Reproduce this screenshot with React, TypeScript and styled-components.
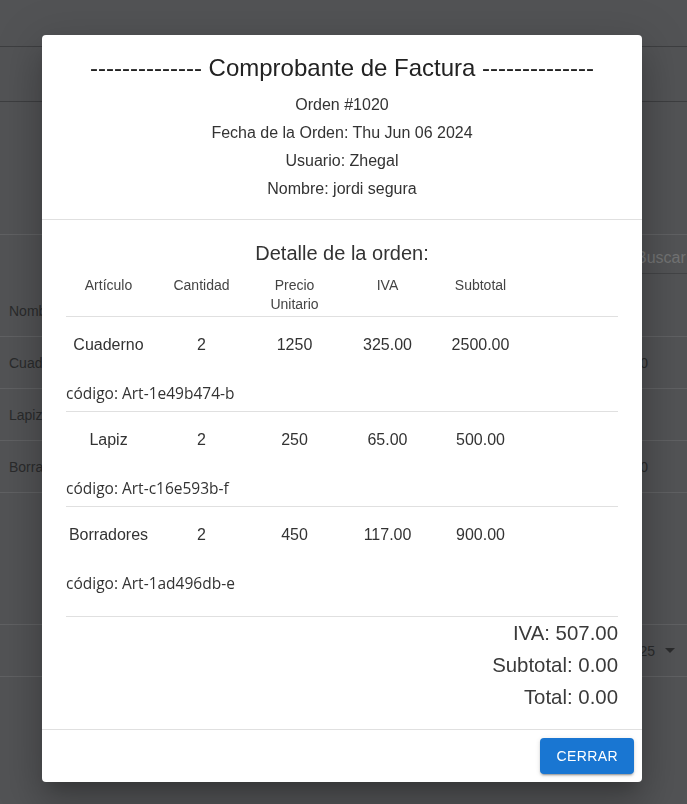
import React from "react";
import styled, { createGlobalStyle } from "styled-components";

const GlobalStyle = createGlobalStyle`
  html, body { margin: 0; padding: 0; }
  body {
    background: #525355;
    font-family: "Liberation Sans", Arial, sans-serif;
    overflow: hidden;
  }
`;

/* ---------- background page (dimmed under the modal) ---------- */
const Page = styled.div`
  width: 100%;
  height: 804px;
  background: #525355;
  color: #2a2b2c;
  font-size: 14px;
`;

const Band = styled.div<{ $h: number; $line: string }>`
  height: ${(p) => p.$h}px;
  border-bottom: 1px solid ${(p) => p.$line};
  display: flex;
  align-items: center;
  justify-content: space-between;
  padding: 0 39px 0 9px;
`;

const SearchRow = styled.div`
  height: 50px;
  display: flex;
  justify-content: flex-end;
  align-items: flex-start;
`;

const SearchField = styled.div`
  width: 51px;
  margin-top: 14px;
  padding: 0 0 7px 0;
  border-bottom: 1px solid #434446;
  color: #727374;
  font-size: 16px;
  line-height: 17px;
  white-space: nowrap;
  overflow: hidden;
`;

const PageSize = styled.div`
  display: flex;
  align-items: center;
  gap: 10px;
  margin-right: -27px;
  font-size: 14px;
`;

const Caret = styled.span`
  width: 0;
  height: 0;
  border-left: 5px solid transparent;
  border-right: 5px solid transparent;
  border-top: 5px solid #2a2b2c;
`;

/* ---------- modal ---------- */
const Backdrop = styled.div`
  position: fixed;
  inset: 0;
  display: flex;
  align-items: flex-start;
  justify-content: flex-start;
  padding: 35px 0 0 42px;
`;

const Dialog = styled.div`
  width: 600px;
  background: #fff;
  border-radius: 4px;
  display: flex;
  flex-direction: column;
  color: rgba(0, 0, 0, 0.87);
  box-shadow: 0px 11px 15px -7px rgba(0, 0, 0, 0.2),
    0px 24px 38px 3px rgba(0, 0, 0, 0.14), 0px 9px 46px 8px rgba(0, 0, 0, 0.12);
`;

const Header = styled.header`
  padding: 16px 24px 16px;
  text-align: center;
  border-bottom: 1px solid #e0e0e0;
`;

const Title = styled.h2`
  margin: 0 0 6px;
  font-size: 24px;
  line-height: 34px;
  font-weight: 400;
  color: #222;
  white-space: nowrap;
`;

const InfoLine = styled.div`
  font-size: 16px;
  line-height: 28px;
  color: #333;
`;

const Content = styled.section`
  padding: 19px 24px 16px;
`;

const SectionTitle = styled.div`
  text-align: center;
  font-size: 20px;
  line-height: 28px;
  margin-bottom: 9px;
  color: #333;
`;

const Cells = styled.div`
  display: grid;
  grid-template-columns: repeat(5, 93px);
  margin-left: -4px;
  text-align: center;
`;

const HeadRow = styled.div`
  padding-bottom: 2px;
  border-bottom: 1px solid #e0e0e0;
  font-size: 14px;
  line-height: 19px;
  color: #444;
`;

const ItemRow = styled.div<{ $last?: boolean }>`
  padding: 16px 0 7px;
  border-bottom: ${(p) => (p.$last ? "none" : "1px solid #e0e0e0")};
  font-size: 16px;
  line-height: 24px;
  color: #333;
`;

const Code = styled.div`
  margin-top: 25px;
  font-family: "Open Sans", "Noto Sans", sans-serif;
  font-size: 15.5px;
  line-height: 22px;
  color: #333;
`;

const Divider = styled.hr`
  margin: 15px 0 0;
  border: none;
  border-top: 1px solid #e0e0e0;
`;

const TotalLine = styled.div`
  text-align: right;
  font-size: 20.4px;
  line-height: 32px;
  color: #3a3a3a;
`;

const Actions = styled.footer`
  border-top: 1px solid #e0e0e0;
  padding: 8px;
  display: flex;
  justify-content: flex-end;
`;

const Button = styled.button`
  height: 36px;
  padding: 6px 16px;
  border: none;
  border-radius: 4px;
  background: #1976d2;
  color: #fff;
  font-family: "Liberation Sans", Arial, sans-serif;
  font-weight: 400;
  font-size: 14px;
  letter-spacing: 0.4px;
  text-transform: uppercase;
  box-shadow: 0px 3px 1px -2px rgba(0, 0, 0, 0.2),
    0px 2px 2px 0px rgba(0, 0, 0, 0.14), 0px 1px 5px 0px rgba(0, 0, 0, 0.12);
  cursor: pointer;
`;

const items = [
  { name: "Cuaderno", qty: 2, price: 1250, iva: "325.00", sub: "2500.00", code: "Art-1e49b474-b" },
  { name: "Lapiz", qty: 2, price: 250, iva: "65.00", sub: "500.00", code: "Art-c16e593b-f" },
  { name: "Borradores", qty: 2, price: 450, iva: "117.00", sub: "900.00", code: "Art-1ad496db-e" },
];

export default function App() {
  return (
    <>
      <GlobalStyle />
      <Page>
        <Band $h={46} $line="#3d3e40" />
        <Band $h={54} $line="#3d3e40" />
        <Band $h={132} $line="#606163" />
        <SearchRow>
          <SearchField>Buscar</SearchField>
        </SearchRow>
        <Band $h={51} $line="#606163">
          <span>Nombre</span>
        </Band>
        <Band $h={51} $line="#606163">
          <span>Cuaderno</span>
          <span>2500.00</span>
        </Band>
        <Band $h={51} $line="#606163">
          <span>Lapiz</span>
        </Band>
        <Band $h={51} $line="#606163">
          <span>Borradores</span>
          <span>900.00</span>
        </Band>
        <Band $h={131} $line="#606163" />
        <Band $h={51} $line="#606163">
          <span />
          <PageSize>
            25 <Caret />
          </PageSize>
        </Band>
      </Page>

      <Backdrop>
        <Dialog>
          <Header>
            <Title>-------------- Comprobante de Factura --------------</Title>
            <InfoLine>Orden #1020</InfoLine>
            <InfoLine>Fecha de la Orden: Thu Jun 06 2024</InfoLine>
            <InfoLine>Usuario: Zhegal</InfoLine>
            <InfoLine>Nombre: jordi segura</InfoLine>
          </Header>
          <Content>
            <SectionTitle>Detalle de la orden:</SectionTitle>
            <HeadRow>
              <Cells>
                <div>Artículo</div>
                <div>Cantidad</div>
                <div>
                  Precio
                  <br />
                  Unitario
                </div>
                <div>IVA</div>
                <div>Subtotal</div>
              </Cells>
            </HeadRow>
            {items.map((it, i) => (
              <ItemRow key={it.code} $last={i === items.length - 1}>
                <Cells>
                  <div>{it.name}</div>
                  <div>{it.qty}</div>
                  <div>{it.price}</div>
                  <div>{it.iva}</div>
                  <div>{it.sub}</div>
                </Cells>
                <Code>código: {it.code}</Code>
              </ItemRow>
            ))}
            <Divider />
            <TotalLine>IVA: 507.00</TotalLine>
            <TotalLine>Subtotal: 0.00</TotalLine>
            <TotalLine>Total: 0.00</TotalLine>
          </Content>
          <Actions>
            <Button>Cerrar</Button>
          </Actions>
        </Dialog>
      </Backdrop>
    </>
  );
}
